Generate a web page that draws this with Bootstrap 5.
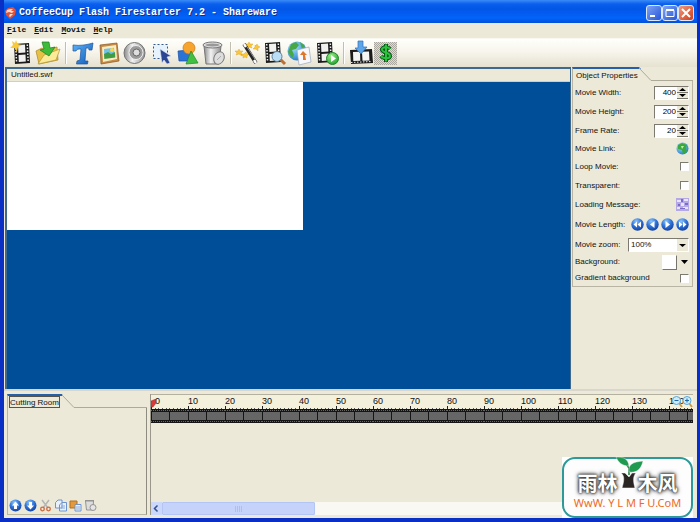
<!DOCTYPE html>
<html lang="en">
<head>
<meta charset="utf-8">
<meta name="viewport" content="width=device-width, initial-scale=1">
<title>CoffeeCup Flash Firestarter 7.2 - Shareware</title>
<link rel="stylesheet" href="https://cdn.jsdelivr.net/npm/bootstrap@5.3.0/dist/css/bootstrap.min.css">
<style>
  body { font: 8px/12px "Liberation Sans", Arial, sans-serif; color: #111; background: #ece9d8; }
  button { border: 0; padding: 0; background: none; font: inherit; color: inherit; line-height: 0; }
  svg { display: block; }
  .app-window { border: solid #0a2fc4; border-width: 0 3px 4px 4px; background: #ece9d8; }
  .title-strip { height: 23px; margin: 0 -3px 0 -4px; padding: 2px 6px 0 5px; gap: 3px; color: #fff;
    background: linear-gradient(#3a8bf8 0, #0a5fee 4px, #0356e6 9px, #0263fb 18px, #0350d8 100%); }
  .title-strip h1 { font: bold 10px/16px "Liberation Mono", monospace; text-shadow: 1px 1px 0 #0b2f8c; }
  .win-btn { width: 16px; height: 16px; border: 1px solid #dce8fb; border-radius: 3px; background: linear-gradient(135deg, #7fa3f4, #2456d8); }
  .win-close { background: linear-gradient(135deg, #f09a7c, #cf3d18); }
  .menu-strip { height: 15px; padding-left: 3px; gap: 8px; font: bold 8px/14px "Liberation Mono", monospace; }
  .menu-strip a { color: #111; text-decoration: none; }
  .tool-strip { height: 29px; padding-left: 5px; background: linear-gradient(#fffffb, #f7f5ec 45%, #e6e2d0); border-top: 1px solid #f8f7f0; }
  .tool-sep { width: 9px; height: 22px; flex: none; background: linear-gradient(90deg, transparent 4px, #c3bfae 4px, #c3bfae 5px, #fff 5px, #fff 6px, transparent 6px); }
  .doc-pane { margin-left: 1px; border: solid #3f6a8e; border-width: 2px 1px 0 2px; }
  .doc-name { height: 13px; padding-left: 4px; background: #ece9d8; border-bottom: 1px solid #d3cfbd; }
  .canvas-area { background: #004e98; }
  .movie-stage { width: 296px; height: 148px; background: #fff; }
  .side-pane { width: 126px; padding: 0 4px 0 1px; }
  .tab-cap { height: 14px; }
  .tab-cap h2, .cut-tab h2 { font: 8px/11px "Liberation Sans", Arial, sans-serif; margin: 0; white-space: nowrap; }
  .tab-cap h2 { border-top: 2px solid #245fa8; padding: 1px 0 0 3px; border-left: 1px solid #b5b1a0; }
  .tab-rest { border-bottom: 1px solid #aeaa9a; }
  .prop-box { border: 1px solid #b9b5a4; border-top: 0; padding: 2px 3px 0 2px; }
  .prop-row { height: 19px; }
  .row-link { height: 17px; }
  .row-length { height: 21px; }
  .row-tight { height: 16px; }
  .length-btns, .cut-btns { gap: 2px; }
  .sunken { border: 1px solid; border-color: #7c7a70 #fff #fff #7c7a70; background: #fff; }
  .spin { width: 35px; height: 14px; }
  .spin input { width: 21px; border: 0; padding: 0; font: inherit; text-align: right; outline: 0; appearance: textfield; -moz-appearance: textfield; }
  .spin input::-webkit-inner-spin-button { appearance: none; }
  .spin button { width: 11px; height: 6px; background: #ece9d8; border-bottom: 1px solid #77756b; }
  .tick { appearance: none; width: 9px; height: 9px; margin: 0; border-radius: 0; }
  .zoom-pick { appearance: none; width: 61px; height: 14px; padding: 0 0 0 2px; font: inherit; border-radius: 0; color: #111;
    background: #fff url("data:image/svg+xml,%3Csvg xmlns='http://www.w3.org/2000/svg' width='11' height='12'%3E%3Cpath fill='%23ece9d8' d='M0 0h11v12H0z'/%3E%3Cpath d='M2 5h7L5.500 8z'/%3E%3C/svg%3E") no-repeat right center; }
  .swatch { width: 15px; height: 15px; border: 1px solid; border-color: #fff #77756b #77756b #fff; background: #fff; }
  .bottom-zone { height: 129px; border-top: 2px solid #d9d6cb; padding: 3px 4px 3px 3px; }
  .cut-pane { width: 140px; margin-right: 3px; }
  .cut-box { border: 1px solid #b9b5a4; border-top: 0; border-right-color: #8e8b7f; padding: 0 0 1px 1px; }
  .cut-tab { height: 14px; }
  .cut-tab h2 { width: 54px; border-top: 2px solid #245fa8; border-left: 1px solid #b5b1a0; padding: 0 1px; }
  .cut-tab span { display: block; outline: 1px solid #55534a; outline-offset: -1px; padding: 1px 0 0 1px; }
  .time-pane { border-left: 1px solid #9b988b; }
  .ruler { height: 15px; border-top: 1px solid #b5b1a0; background: #f3f0dc; font-size: 9px; line-height: 13px; }
  .ruler-mark { width: 37px; flex: none; }
  .ruler-svg { position: absolute; left: 0; bottom: 0; }
  .playhead { position: absolute; left: 0; top: 4px; }
  .ruler-zoom { position: absolute; right: 0; top: 0; }
  .h-scroll { height: 13px; background: #f9f8f3; }
  .h-thumb { width: 153px; border: 1px solid #b3c5f5; border-radius: 1px; background: #c5d3fb; }
  .h-arrow { width: 11px; background: #cbd8fb; }
  .brand { right: 4px; bottom: 0; background: #fff; z-index: 2; }
  .brand-in { border: 2px solid #2b9a98; border-radius: 13px; width: 131px; height: 61px; background: #fdfdfd; padding-top: 11px; }
  .brand-cjk { height: 26px; font: bold 20px/26px "Noto Sans CJK SC", sans-serif; color: #fff; text-shadow: 0 0 2px #333, 0 0 3px #444, 0 0 4px #666, 0 0 5px #777; }
  .brand-url { font: 11px/14px "Noto Sans", sans-serif; color: #ee6a25; text-decoration: none; }
  .plant { margin-bottom: 8px; }
</style>
<script src="https://cdn.jsdelivr.net/npm/bootstrap@5.3.0/dist/js/bootstrap.bundle.min.js"></script>
</head>
<body>
<svg width="0" height="0" class="position-absolute" aria-hidden="true">
  <defs>
    <radialGradient id="gBlue" cx=".4" cy=".25" r=".8"><stop offset="0" stop-color="#8cc4fb"/><stop offset=".5" stop-color="#2f74d8"/><stop offset="1" stop-color="#123d9c"/></radialGradient>
    <radialGradient id="gGlobe" cx=".35" cy=".3" r=".8"><stop offset="0" stop-color="#a6e4ff"/><stop offset="1" stop-color="#1a76c4"/></radialGradient>
    <radialGradient id="gGreen" cx=".4" cy=".3" r=".8"><stop offset="0" stop-color="#9cf08a"/><stop offset="1" stop-color="#169a26"/></radialGradient>
    <linearGradient id="gT" x2="1" y2="1"><stop offset="0" stop-color="#5cb4f8"/><stop offset="1" stop-color="#1059b8"/></linearGradient>
    <linearGradient id="gGray"><stop offset="0" stop-color="#8c8c8c"/><stop offset=".4" stop-color="#f2f2f2"/><stop offset="1" stop-color="#8f8f8f"/></linearGradient>
    <g id="film">
      <path fill="#1c1c1c" d="M5 4 20 3l1 20-15 1z"/>
      <path fill="#f2f2f0" d="m9 5 7-.5.4 8-7 .5zM9.500 15l7-.5.3 7-7 .5z"/>
      <path stroke="#eee" stroke-width="1.500" stroke-dasharray="1.500 1.500" d="m6.700 5 .9 18M18.300 4.500l.9 18"/>
    </g>
  </defs>
</svg>

<div class="app-window d-flex flex-column vh-100 position-relative overflow-hidden">
  <header class="title-strip d-flex align-items-center flex-shrink-0">
    <svg width="11" height="12" viewBox="0 0 11 12"><path fill="#e0503c" d="M0 4 3 1l5-1 3 3-1 5-5 4-2-2-2-2z"/><path fill="#fbdccb" d="m2 3 3-1 3 0-2 2 3 0-2 2-3-1-3 1zM4 9l1-2 3 0-3 3z"/></svg>
    <h1 class="m-0 flex-grow-1 text-nowrap">CoffeeCup Flash Firestarter 7.2 - Shareware</h1>
    <div class="d-flex">
      <button class="win-btn" aria-label="Minimize"><svg width="14" height="14"><path fill="#fff" d="M3 9h5v2H3z"/></svg></button>
      <button class="win-btn" aria-label="Maximize"><svg width="14" height="14"><path fill="none" stroke="#fff" d="M3 4.500h8v6H3zM3 3.500h8"/></svg></button>
      <button class="win-btn win-close" aria-label="Close"><svg width="14" height="14"><path stroke="#fff" stroke-width="2" d="m3 3 8 8m0-8-8 8"/></svg></button>
    </div>
  </header>

  <nav class="menu-strip d-flex flex-shrink-0" aria-label="Main menu">
    <a href="#"><u>F</u>ile</a><a href="#"><u>E</u>dit</a><a href="#"><u>M</u>ovie</a><a href="#"><u>H</u>elp</a>
  </nav>

  <div class="tool-strip d-flex align-items-center flex-shrink-0" role="toolbar" aria-label="Tools">
    <button aria-label="New movie"><svg width="26" height="26"><use href="#film"/><path fill="#f9c93c" d="m7 0 1.500 4L13 5 9 7l-1 5-2.500-4L1 8l3-3-1-4 3 2z"/></svg></button>
    <button aria-label="Open"><svg width="26" height="26"><path fill="#e9c046" stroke="#a88420" stroke-width=".7" d="M1 11 7 8l3 2 12-3 1 13-19 4z"/><path fill="#fbeb98" stroke="#b5952f" stroke-width=".7" d="m3 24 6-9 16-6-4 11z"/><path fill="#3fbb3a" stroke="#1c7d20" stroke-width=".7" d="M7 2h7l1 6 5-1-6 9-9-6 4-1z"/></svg></button>
    <div class="tool-sep"></div>
    <button aria-label="Text"><svg width="26" height="26"><path fill="url(#gT)" stroke="#1b55a3" stroke-width=".7" d="M3 5c7 1 13 0 20-2l-1 7-3 0c0-2-1-2-3-2l-1 13 3 0-.5 3-11 0 .5-3 3-1 1-11c-3 0-4 0-5 2L3 11z"/></svg></button>
    <button aria-label="Image"><svg width="26" height="26"><path fill="#c98a46" stroke="#875620" stroke-width=".7" d="m4 5 17-2 2 18-18 3z"/><path fill="#f8edc0" d="m6 7 14-2 1 14-14 3z"/><path fill="#70c2e8" d="m8 9 10-1.300.5 6-10.300 1z"/><path fill="#3f9b44" d="m8 14 4-2 3 2 4-2 .3 5.500-11 1.500z"/><circle cx="16" cy="10" r="2" fill="#ffd447"/></svg></button>
    <button aria-label="Sound"><svg width="26" height="26"><circle cx="12.500" cy="13" r="10.500" fill="url(#gGray)" stroke="#747474"/><circle cx="14" cy="12.500" r="7" fill="#9b9b9b" stroke="#efefef"/><circle cx="14.500" cy="12.500" r="3.500" fill="#dedede" stroke="#666"/></svg></button>
    <button aria-label="Select"><svg width="26" height="26"><path fill="#e6f2fc" stroke="#33588c" stroke-dasharray="2 2" d="M5.500 4.500h14v14h-14z"/><path fill="#2b4794" stroke="#dbe4f8" stroke-width=".6" d="m12 9 11 7-4 1 3 6-3 1-3-4-2 3z"/></svg></button>
    <button aria-label="Shapes"><svg width="26" height="26"><path fill="#2b73d6" stroke="#184f9f" stroke-width=".7" d="m4 11 11-1 1 11H5z"/><circle cx="15" cy="8" r="6" fill="#f7a42f" stroke="#cb7510" stroke-width=".7"/><path fill="#43c043" stroke="#1d8a25" stroke-width=".7" d="m17 11 7 12-12 1z"/></svg></button>
    <button aria-label="Delete"><svg width="26" height="26"><path fill="url(#gGray)" stroke="#777" d="M4 6h17l-2 18H6z"/><ellipse cx="12.500" cy="5" rx="9.500" ry="3" fill="#ddd" stroke="#777"/><ellipse cx="12.500" cy="5" rx="7" ry="1.500" fill="#999"/><ellipse cx="19" cy="18" rx="5" ry="6.500" transform="rotate(25 19 18)" fill="#ddd" stroke="#777"/><path stroke="#aaa" d="m17 20 4-4"/></svg></button>
    <div class="tool-sep"></div>
    <button aria-label="Effects"><svg width="26" height="26"><path fill="#fac63a" stroke="#d99c1a" stroke-width=".4" d="m14 2 1 2 3 0-2 2 1 2-3-1-2 1 0-2-2-2 3 0zM22 4l1 2 2 1-2 1 0 3-2-2-3 0 2-2 0-2 1 1zM4 9l1 2 3 0-2 2 1 3-3-2-3 1 1-2-2-2 3 0zM11 12l1 2 2 0-2 2 0 2-2-1-2 1 0-2-2-2 3 0z"/><path stroke="#252525" stroke-width="3.500" d="m9 4 12 19"/><path stroke="#fff" stroke-width="2.500" d="m9 4 2 3M19 20l2 3"/><path stroke="#999" d="m12 7 8 12"/></svg></button>
    <button aria-label="Preview"><svg width="26" height="26"><use href="#film" x="-1" y="-1"/><path stroke="#bb6f36" stroke-width="3" d="m19 19 5 5"/><circle cx="16" cy="16.500" r="5" fill="#b9def6" stroke="#61809b"/></svg></button>
    <button aria-label="Publish"><svg width="26" height="26"><circle cx="10" cy="11" r="9.500" fill="url(#gGlobe)"/><path fill="#48a844" d="m4 4 5-2 3 3-3 4-4 1 2 5-2 3-4-6zM13 2l5 4-3 3z"/><path fill="#f7f8fb" stroke="#9ba8ba" stroke-width=".7" d="m10 10 12-3 2 15-12 3z"/><path fill="#e27629" d="m16 11 4 4-2 0 1 5-3 0 0-5-3 0z"/></svg></button>
    <button aria-label="Export movie"><svg width="26" height="26"><use href="#film" x="-1" y="-1"/><circle cx="19.500" cy="18.500" r="6" fill="url(#gGreen)" stroke="#22862a"/><path fill="#fff" d="m18 15 5 3.500-5 3.500z"/></svg></button>
    <div class="tool-sep"></div>
    <button aria-label="Import movie"><svg width="26" height="26"><path fill="#1c1c1c" d="m2 10 22-1 1 14-22 1z"/><path fill="#f5f5f3" d="m5 12 7-.3.300 9-7 .3zM14 11.700l7-.3.500 9-7 .3z"/><path stroke="#eee" stroke-dasharray="1.500 1.500" d="m3 22.500 21-1"/><path fill="#5ea5e8" stroke="#2b6fbd" stroke-width=".7" d="M10 1h5v6h4l-6 7-6-6h3z"/></svg></button>
    <button aria-label="Buy"><svg width="26" height="26"><defs><pattern id="dots" width="2" height="2" patternUnits="userSpaceOnUse"><path fill="#dedbd2" d="M0 0h2v2H0z"/><path fill="#aaa79f" d="M0 0h1v1H0zM1 1h1v1H1z"/></pattern></defs><path fill="url(#dots)" d="M0 2h23v23H0z"/><path fill="none" stroke="#0b561a" stroke-width="4" d="M16 9c-2-3-9-2-8 1 1 3 8 2 8 6 0 3-7 3-9 0M12 4v18"/><path fill="none" stroke="#2bc23c" stroke-width="2" d="M16 9c-2-3-9-2-8 1 1 3 8 2 8 6 0 3-7 3-9 0M12 4.500v17"/></svg></button>
  </div>

  <main class="d-flex flex-grow-1 overflow-hidden">
    <section class="doc-pane d-flex flex-column flex-grow-1">
      <div class="doc-name">Untitled.swf</div>
      <div class="canvas-area flex-grow-1"><div class="movie-stage"></div></div>
    </section>
    <aside class="side-pane flex-shrink-0">
      <div class="tab-cap d-flex">
        <h2>Object Properties</h2>
        <svg width="14" height="14"><path fill="#245fa8" d="M0 0h1l2 2H0z"/><path fill="none" stroke="#aeaa9a" d="m1 1 12 12.500h1"/></svg>
        <div class="tab-rest flex-grow-1"></div>
      </div>
      <form class="prop-box">
        <div class="prop-row d-flex align-items-center justify-content-between"><label for="mw">Movie Width:</label><div class="spin sunken d-flex justify-content-between"><input id="mw" type="number" value="400"><div class="d-flex flex-column"><button type="button" aria-label="Wider"><svg width="11" height="5"><path d="M2 4h7L5.500 1z"/></svg></button><button type="button" aria-label="Narrower"><svg width="11" height="5"><path d="M2 1h7L5.500 4z"/></svg></button></div></div></div>
        <div class="prop-row d-flex align-items-center justify-content-between"><label for="mh">Movie Height:</label><div class="spin sunken d-flex justify-content-between"><input id="mh" type="number" value="200"><div class="d-flex flex-column"><button type="button" aria-label="Taller"><svg width="11" height="5"><path d="M2 4h7L5.500 1z"/></svg></button><button type="button" aria-label="Shorter"><svg width="11" height="5"><path d="M2 1h7L5.500 4z"/></svg></button></div></div></div>
        <div class="prop-row d-flex align-items-center justify-content-between"><label for="fr">Frame Rate:</label><div class="spin sunken d-flex justify-content-between"><input id="fr" type="number" value="20"><div class="d-flex flex-column"><button type="button" aria-label="Faster"><svg width="11" height="5"><path d="M2 4h7L5.500 1z"/></svg></button><button type="button" aria-label="Slower"><svg width="11" height="5"><path d="M2 1h7L5.500 4z"/></svg></button></div></div></div>
        <div class="prop-row row-link d-flex align-items-center justify-content-between"><span>Movie Link:</span><button type="button" aria-label="Movie link"><svg width="13" height="13"><circle cx="6.500" cy="6.500" r="6" fill="url(#gGlobe)"/><path fill="#3aa83c" d="m2 3 4-2 5 2-1 3 1 4-4 2-1-4-4-1z"/><path fill="#b9f0a5" d="m5 4 3 0-2 3z"/></svg></button></div>
        <div class="prop-row d-flex align-items-center justify-content-between"><label for="lm">Loop Movie:</label><input id="lm" type="checkbox" class="tick sunken"></div>
        <div class="prop-row d-flex align-items-center justify-content-between"><label for="tr">Transparent:</label><input id="tr" type="checkbox" class="tick sunken"></div>
        <div class="prop-row d-flex align-items-center justify-content-between"><span>Loading Message:</span><button type="button" aria-label="Loading message"><svg width="13" height="13"><path fill="#b4a8e6" d="M0 0h13v13H0z"/><path fill="#e9e4fb" d="M1 2h4v2H1zM8 1h4v2H8zM5 5h3v3H5zM1 9h3v2H1zM7 9h5v2H7z"/><path fill="#7c6bc4" d="M5 1h2v3H5zM2 6h2v2H2zM9 5h3v2H9zM4 10h5v1H4z"/></svg></button></div>
        <div class="prop-row row-length d-flex align-items-center justify-content-between"><span>Movie Length:</span><div class="length-btns d-flex">
          <button type="button" aria-label="First"><svg width="13" height="13"><circle cx="6.500" cy="6.500" r="6.200" fill="url(#gBlue)"/><path fill="#fff" d="M6 3.500v6l-3.500-3zM10 3.500v6l-3.500-3z"/></svg></button>
          <button type="button" aria-label="Previous"><svg width="13" height="13"><circle cx="6.500" cy="6.500" r="6.200" fill="url(#gBlue)"/><path fill="#fff" d="M8.500 3v7L4 6.500z"/></svg></button>
          <button type="button" aria-label="Next"><svg width="13" height="13"><circle cx="6.500" cy="6.500" r="6.200" fill="url(#gBlue)"/><path fill="#fff" d="M4.500 3v7L9 6.500z"/></svg></button>
          <button type="button" aria-label="Last"><svg width="13" height="13"><circle cx="6.500" cy="6.500" r="6.200" fill="url(#gBlue)"/><path fill="#fff" d="M3 3.500v6l3.500-3zM7 3.500v6l3.500-3z"/></svg></button></div></div>
        <div class="prop-row d-flex align-items-center justify-content-between"><label for="mz">Movie zoom:</label><select id="mz" class="zoom-pick sunken"><option>100%</option></select></div>
        <div class="prop-row row-tight d-flex align-items-center justify-content-between"><span>Background:</span><button type="button" class="d-flex align-items-center" aria-label="Background colour"><span class="swatch"></span><svg width="12" height="6"><path d="M4 1h7L7.500 5z"/></svg></button></div>
        <div class="prop-row row-tight d-flex align-items-center justify-content-between"><label for="gb">Gradient background</label><input id="gb" type="checkbox" class="tick sunken"></div>
      </form>
    </aside>
  </main>

  <footer class="bottom-zone d-flex flex-shrink-0">
    <section class="cut-pane d-flex flex-column flex-shrink-0">
      <div class="cut-tab d-flex">
        <h2><span>Cutting Room</span></h2>
        <svg width="14" height="14"><path fill="#245fa8" d="M0 0h1l1 2H0z"/><path fill="none" stroke="#aeaa9a" d="m1 1 12 12.500h1"/></svg>
        <div class="tab-rest flex-grow-1"></div>
      </div>
      <div class="cut-box d-flex flex-grow-1 align-items-end">
        <div class="cut-btns d-flex">
          <button aria-label="Up"><svg width="13" height="14"><circle cx="6.500" cy="6.500" r="6" fill="url(#gBlue)"/><path fill="#fff" d="m6.500 2.500 3.500 4H8v3.500H5V6.500H3z"/></svg></button>
          <button aria-label="Down"><svg width="13" height="14"><circle cx="6.500" cy="6.500" r="6" fill="url(#gBlue)"/><path fill="#fff" d="M6.500 10.500 3 6.500h2V3h3v3.500h2z"/></svg></button>
          <button aria-label="Cut"><svg width="13" height="14"><path fill="none" stroke="#b5b5b5" stroke-width="1.500" d="m3 1 6 8M10 1 4 9"/><circle cx="3.500" cy="10" r="1.800" fill="none" stroke="#d0693b" stroke-width="1.300"/><circle cx="9.500" cy="10" r="1.800" fill="none" stroke="#d0693b" stroke-width="1.300"/></svg></button>
          <button aria-label="Copy"><svg width="13" height="14"><path fill="#e8f1fc" stroke="#6f94cd" d="M1.500 3.500 4 1h4v8H1.500zM5.500 6 8 3.500h4.500V12h-7z"/><path stroke="#8eabd9" d="M7 7h4M7 9h4"/></svg></button>
          <button aria-label="Paste"><svg width="13" height="14"><path fill="#e4993c" stroke="#b36f21" d="M1 2h7v7H1z"/><path fill="#e8f1fc" stroke="#6f94cd" d="M6 5.500h6V12H6z"/><path stroke="#8eabd9" d="M7 8h4M7 10h4"/></svg></button>
          <button aria-label="Delete"><svg width="13" height="14"><path fill="#ddd" stroke="#949494" d="M1.500 2h8L9 11H2.500zM1 1.500h9"/><circle cx="9" cy="8.500" r="3" fill="#e5e5e5" stroke="#949494"/></svg></button>
        </div>
      </div>
    </section>
    <section class="time-pane d-flex flex-column flex-grow-1 overflow-hidden">
      <div class="ruler position-relative d-flex overflow-hidden flex-shrink-0">
        <div class="ruler-mark ps-1">0</div><div class="ruler-mark">10</div><div class="ruler-mark">20</div><div class="ruler-mark">30</div><div class="ruler-mark">40</div><div class="ruler-mark">50</div><div class="ruler-mark">60</div><div class="ruler-mark">70</div><div class="ruler-mark">80</div><div class="ruler-mark">90</div><div class="ruler-mark">100</div><div class="ruler-mark">110</div><div class="ruler-mark">120</div><div class="ruler-mark">130</div><div class="ruler-mark">140</div>
        <svg class="ruler-svg" width="100%" height="3"><defs><pattern id="ticks" width="37" height="3" patternUnits="userSpaceOnUse"><path fill="#222" d="M0 0h1v3H0z"/><path fill="#555" d="M4 2h1v1H4zM7 2h1v1H7zM11 2h1v1h-1zM15 2h1v1h-1zM18 2h1v1h-1zM22 2h1v1h-1zM26 2h1v1h-1zM29 2h1v1h-1zM33 2h1v1h-1z"/></pattern></defs><rect width="100%" height="3" fill="url(#ticks)"/></svg>
        <svg class="playhead" width="7" height="10"><path fill="#d93a3a" stroke="#a61f1f" stroke-width=".5" d="M0 2 5 0l0 4-3 4-2 0z"/></svg>
        <svg class="ruler-zoom" width="24" height="13"><path stroke="#c89b4a" stroke-width="2" d="m10 8 3 4M20 8l3 4"/><circle cx="7.500" cy="5.500" r="4" fill="#cdebfb" stroke="#58a8d6"/><circle cx="18" cy="5.500" r="4" fill="#cdebfb" stroke="#58a8d6"/><path stroke="#1d69ad" d="M5.500 5.500h4M16 5.500h4M18 3.500v4"/></svg>
      </div>
      <svg width="100%" height="14" class="flex-shrink-0"><defs><pattern id="strip" width="37" height="14" patternUnits="userSpaceOnUse"><path fill="#151515" d="M0 0h37v14H0z"/><path fill="#666" d="M1 3h17v8H1zM19 3h18v8H19z"/><path stroke="#666" stroke-dasharray="1 1" d="M0 1.500h37M0 12.500h37"/></pattern></defs><rect width="100%" height="14" fill="url(#strip)"/></svg>
      <div class="flex-grow-1"></div>
      <div class="h-scroll d-flex flex-shrink-0">
        <button class="h-arrow" aria-label="Scroll left"><svg width="11" height="13"><path fill="none" stroke="#33518f" stroke-width="1.500" d="M6.500 3.500 3.500 6.500l3 3"/></svg></button>
        <div class="h-thumb d-flex align-items-center justify-content-center"><svg width="8" height="6"><path stroke="#a9bff5" d="M.5 0v6M2.500 0v6M4.500 0v6M6.500 0v6"/></svg></div>
      </div>
    </section>
  </footer>

  <div class="brand position-absolute">
    <div class="brand-in text-center">
      <div class="brand-cjk d-flex justify-content-center align-items-end">
        <span>雨林</span>
        <svg class="plant overflow-visible flex-shrink-0" width="20" height="32" viewBox="0 0 20 32"><path fill="#2a2522" stroke="#fff" stroke-width=".5" d="M3 17c4 3 3 8 1 15h13c-2-7-2-12 1-15h-4l-3 4-4-4z"/><path fill="none" stroke="#1f7a40" stroke-width="1.500" d="M11 19V12L8 8"/><path fill="#1f9a50" stroke="#fff" stroke-width=".4" d="M-2 1c7 0 12 1 13 9C4 10 0 6-2 1zM11 16C10 8 15 6 25 5c-2 9-7 12-14 11z"/></svg>
        <span>木风</span>
      </div>
      <a class="brand-url d-block" href="#">WwW. Y L M F U.CoM</a>
    </div>
  </div>
</div>
</body>
</html>
